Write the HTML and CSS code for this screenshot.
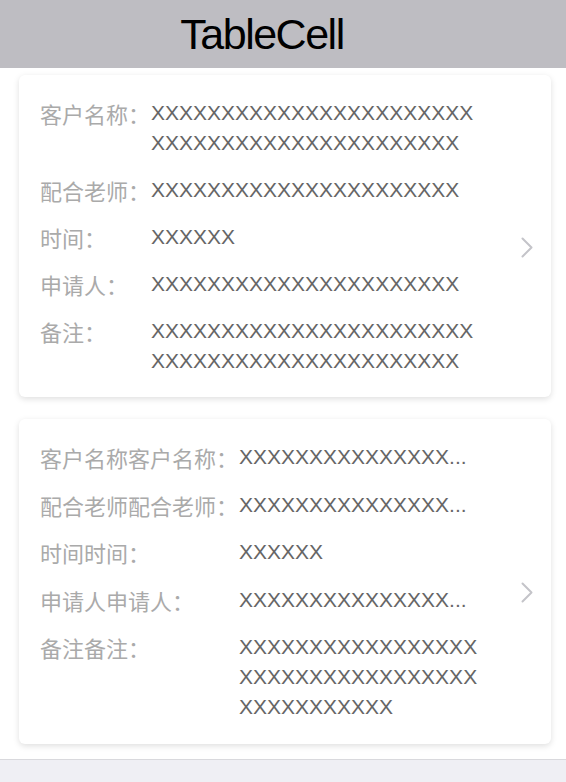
FILE: index.html
```html
<!DOCTYPE html>
<html lang="zh">
<head>
<meta charset="utf-8">
<title>TableCell</title>
<link rel="stylesheet" href="styles.css">
</head>
<body>
<div class="page">
  <header class="navbar"><h1 class="navbar-title">TableCell</h1></header>
  <main class="list">
    <div class="cell">
      <div class="card">
        <div class="fields">
          <div class="label">客户名称：</div><div class="value">XXXXXXXXXXXXXXXXXXXXXXXXXXXXXXXXXXXXXXXXXXXXX</div>
          <div class="label">配合老师：</div><div class="value">XXXXXXXXXXXXXXXXXXXXXX</div>
          <div class="label">时间：</div><div class="value">XXXXXX</div>
          <div class="label">申请人：</div><div class="value">XXXXXXXXXXXXXXXXXXXXXX</div>
          <div class="label">备注：</div><div class="value">XXXXXXXXXXXXXXXXXXXXXXXXXXXXXXXXXXXXXXXXXXXXX</div>
        </div>
        <svg class="chevron" width="12" height="21" viewBox="0 0 12 21"><path d="M1.5 1.5 L10.5 10.5 L1.5 19.5" fill="none" stroke="#c4c4c9" stroke-width="2" stroke-linecap="round" stroke-linejoin="round"/></svg>
      </div>
    </div>
    <div class="cell">
      <div class="card card-wide">
        <div class="fields">
          <div class="label">客户名称客户名称：</div><div class="value value-line">XXXXXXXXXXXXXXX...</div>
          <div class="label">配合老师配合老师：</div><div class="value value-line">XXXXXXXXXXXXXXX...</div>
          <div class="label">时间时间：</div><div class="value">XXXXXX</div>
          <div class="label">申请人申请人：</div><div class="value value-line">XXXXXXXXXXXXXXX...</div>
          <div class="label">备注备注：</div><div class="value">XXXXXXXXXXXXXXXXXXXXXXXXXXXXXXXXXXXXXXXXXXXXX</div>
        </div>
        <svg class="chevron" width="12" height="21" viewBox="0 0 12 21"><path d="M1.5 1.5 L10.5 10.5 L1.5 19.5" fill="none" stroke="#c4c4c9" stroke-width="2" stroke-linecap="round" stroke-linejoin="round"/></svg>
      </div>
    </div>
  </main>
  <footer class="bottom-bar"></footer>
</div>
</body>
</html>
```

FILE: styles.css
```css
* { box-sizing: border-box; }
html, body { margin: 0; padding: 0; background: #ffffff; }
body { font-family: "Noto Sans CJK SC", "Noto Sans", sans-serif; }

.page {
  display: flex;
  flex-direction: column;
  min-height: 782px;
}

.navbar {
  height: 68px;
  background: #bebdc2;
  display: flex;
  align-items: center;
  justify-content: center;
  padding-right: 42px;
}
.navbar-title {
  margin: 0;
  font-family: "Liberation Sans", Arial, sans-serif;
  font-weight: normal;
  font-size: 43px;
  letter-spacing: -1.5px;
  color: #000;
  line-height: 1;
}

.list {
  display: flex;
  flex-direction: column;
}

.cell {
  padding: 7px 15px 15px 19px;
}

.card {
  background: #fff;
  border-radius: 6px;
  box-shadow: 0 2px 6px rgba(0, 0, 0, 0.13);
  display: flex;
  align-items: center;
  padding: 23px 0 21px 21px;
}
.card-wide {
  padding-bottom: 22px;
}
.card-wide .fields {
  row-gap: 17.5px;
}

.fields {
  width: 442px;
  display: grid;
  grid-template-columns: max-content minmax(0, 1fr);
  column-gap: 1px;
  row-gap: 17px;
}

.label {
  font-size: 22px;
  line-height: 30px;
  color: #aaaaaa;
  white-space: nowrap;
}

.value {
  font-family: "Liberation Sans", Arial, sans-serif;
  font-size: 21px;
  line-height: 30px;
  color: #666666;
  word-break: break-all;
  min-width: 0;
}

.value-line {
  white-space: nowrap;
}

.chevron {
  flex: none;
  margin-left: 39px;
  margin-top: 21px;
}

.bottom-bar {
  flex: 1;
  min-height: 24px;
  background: #efeff4;
  border-top: 1px solid #d9d9dd;
}
```
